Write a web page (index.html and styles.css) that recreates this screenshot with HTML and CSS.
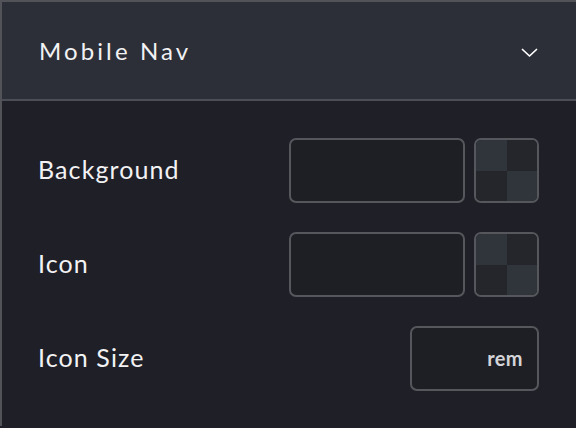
FILE: index.html
```html
<!DOCTYPE html>
<html>
<head>
<meta charset="utf-8">
<link rel="stylesheet" href="styles.css">
</head>
<body>
<div class="panel">
  <div class="header">
    <span class="title">Mobile Nav</span>
    <svg class="chev" width="17" height="10" viewBox="0 0 17 10"><path d="M1.5 1.5 L8.5 8 L15.5 1.5" fill="none" stroke="#ffffff" stroke-width="1.7" stroke-linecap="round" stroke-linejoin="round"/></svg>
  </div>
  <div class="body">
    <div class="row">
      <span class="label">Background</span>
      <div class="controls">
        <div class="input wide"></div>
        <div class="swatch"><i class="a"></i><i class="b"></i><i class="b"></i><i class="a"></i></div>
      </div>
    </div>
    <div class="row">
      <span class="label">Icon</span>
      <div class="controls">
        <div class="input wide"></div>
        <div class="swatch"><i class="a"></i><i class="b"></i><i class="b"></i><i class="a"></i></div>
      </div>
    </div>
    <div class="row">
      <span class="label">Icon Size</span>
      <div class="controls">
        <div class="input unit"><span class="rem">rem</span></div>
      </div>
    </div>
  </div>
</div>
</body>
</html>
```
FILE: styles.css
```css
html, body {
  margin: 0;
  padding: 0;
  background: #1f2027;
  width: 576px;
  height: 428px;
  overflow: hidden;
}
.panel {
  border-left: 2px solid #515359;
  border-top: 2px solid #515359;
  height: 426px;
  box-sizing: border-box;
  font-family: Lato, "Noto Sans", sans-serif;
  color: #f2f2f4;
}
.header {
  height: 97px;
  background: #2c2f37;
  border-bottom: 2px solid #4c4e55;
  display: flex;
  align-items: center;
  justify-content: space-between;
  padding: 0 37px 0 37px;
}
.title {
  font-size: 24px;
  letter-spacing: 3.1px;
}
.chev {
  display: block;
  margin-top: 5px;
  margin-right: 1px;
}
.body {
  padding: 37px 37px 0 36px;
  display: flex;
  flex-direction: column;
  gap: 29px;
}
.row {
  display: flex;
  align-items: center;
  justify-content: space-between;
  height: 65px;
}
.label {
  font-size: 25px;
  letter-spacing: 1.1px;
  margin-top: -3px;
}
.controls {
  display: flex;
  gap: 9px;
}
.input {
  height: 65px;
  box-sizing: border-box;
  border: 2px solid #55575d;
  border-radius: 7px;
  background: #1e1f25;
}
.wide {
  width: 176px;
}
.unit {
  width: 129px;
  display: flex;
  align-items: center;
  justify-content: flex-end;
  padding-right: 14px;
}
.rem {
  font-size: 20px;
  font-weight: 700;
  letter-spacing: 0.4px;
  color: #d4d4d8;
  margin-top: -2px;
}
.swatch {
  width: 65px;
  height: 65px;
  box-sizing: border-box;
  border: 2px solid #55575d;
  border-radius: 7px;
  overflow: hidden;
  display: grid;
  grid-template-columns: 1fr 1fr;
  grid-template-rows: 1fr 1fr;
}
.swatch i.a {
  background: #30343b;
}
.swatch i.b {
  background: #25262b;
}
```
